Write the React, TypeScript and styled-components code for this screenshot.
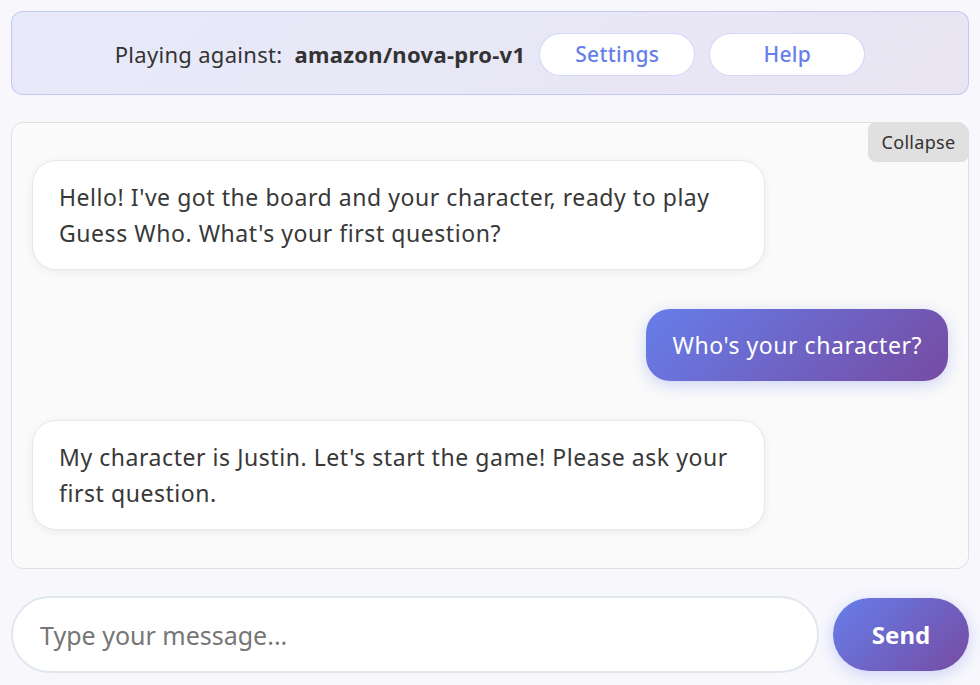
import React from "react";
import styled, { createGlobalStyle } from "styled-components";

const Global = createGlobalStyle`
  html, body { margin: 0; padding: 0; }
  body {
    background: #f7f7fc;
    font-family: "Noto Sans", "Open Sans", sans-serif;
    color: #333;
  }
  * { box-sizing: border-box; }
`;

const Page = styled.div`
  display: flex;
  flex-direction: column;
  gap: 27px;
  padding: 11px 11px 12px;
  height: 685px;
`;

const Header = styled.header`
  flex: 0 0 84px;
  display: flex;
  align-items: center;
  justify-content: center;
  gap: 14px;
  padding-top: 2px;
  border: 1px solid rgba(102, 126, 234, 0.3);
  border-radius: 12px;
  background: linear-gradient(135deg, rgba(102, 126, 234, 0.1), rgba(118, 75, 162, 0.1));
`;

const Label = styled.span`
  font-size: 22px;
  letter-spacing: 0.3px;
  color: #333;
`;

const Model = styled.strong`
  font-size: 22px;
  letter-spacing: 0.3px;
  font-weight: 700;
  color: #333;
`;

const Opponent = styled.div`
  display: flex;
  gap: 12px;
  align-items: baseline;
`;

const HeaderButton = styled.button`
  width: 156px;
  height: 43px;
  border-radius: 22px;
  border: 1px solid rgba(102, 126, 234, 0.3);
  background: #fff;
  color: #667eea;
  font-family: inherit;
  font-size: 21px;
  letter-spacing: 0.3px;
  font-weight: 500;
  cursor: pointer;
`;

const ChatPanel = styled.section`
  position: relative;
  flex: 1 1 auto;
  min-height: 0;
  display: flex;
  flex-direction: column;
  gap: 39px;
  padding: 37px 20px 38px;
  background: #fafafa;
  border: 1px solid #e0e0e0;
  border-radius: 12px;
`;

const CollapseButton = styled.button`
  position: absolute;
  top: -1px;
  right: -1px;
  width: 101px;
  height: 40px;
  border: none;
  border-radius: 8px 12px 8px 8px;
  background: #e0e0e0;
  color: #333;
  font-family: inherit;
  font-size: 18px;
  letter-spacing: 0.3px;
  cursor: pointer;
`;

const Bubble = styled.div<{ $user?: boolean }>`
  max-width: 80%;
  align-self: ${(p) => (p.$user ? "flex-end" : "flex-start")};
  padding: 18px 26px;
  font-size: 23px;
  letter-spacing: 0.55px;
  line-height: 36px;
  border-radius: 24px;
  ${(p) =>
    p.$user
      ? `
    background: linear-gradient(135deg, #667eea 0%, #764ba2 100%);
    color: #fff;
    box-shadow: 0 4px 15px rgba(102, 126, 234, 0.3);
  `
      : `
    width: 80%;
    background: #fff;
    color: #383838;
    border: 1px solid #e8e8e8;
    box-shadow: 0 2px 8px rgba(0, 0, 0, 0.06);
  `}
`;

const InputRow = styled.form`
  flex: 0 0 77px;
  display: flex;
  align-items: center;
  gap: 14px;
`;

const MessageInput = styled.input`
  flex: 1;
  height: 77px;
  padding: 0 27px;
  border: 2px solid #e1e7ef;
  border-radius: 39px;
  background: #fff;
  font-family: "Noto Sans", sans-serif;
  font-size: 25px;
  color: #333;
  outline: none;
  &::placeholder { color: #767676; }
`;

const SendButton = styled.button`
  width: 136px;
  height: 73px;
  border: none;
  border-radius: 37px;
  background: linear-gradient(135deg, #667eea 0%, #764ba2 100%);
  color: #fff;
  font-family: "Noto Sans", sans-serif;
  font-size: 24px;
  font-weight: 700;
  box-shadow: 0 4px 15px rgba(102, 126, 234, 0.3);
  cursor: pointer;
`;

const messages = [
  { user: false, text: "Hello! I've got the board and your character, ready to play Guess Who. What's your first question?" },
  { user: true, text: "Who's your character?" },
  { user: false, text: "My character is Justin. Let's start the game! Please ask your first question." },
];

export default function App() {
  return (
    <>
      <Global />
      <Page>
        <Header>
          <Opponent>
            <Label>Playing against:</Label>
            <Model>amazon/nova-pro-v1</Model>
          </Opponent>
          <HeaderButton>Settings</HeaderButton>
          <HeaderButton>Help</HeaderButton>
        </Header>
        <ChatPanel>
          <CollapseButton>Collapse</CollapseButton>
          {messages.map((m, i) => (
            <Bubble key={i} $user={m.user}>
              {m.text}
            </Bubble>
          ))}
        </ChatPanel>
        <InputRow onSubmit={(e) => e.preventDefault()}>
          <MessageInput placeholder="Type your message..." />
          <SendButton type="submit">Send</SendButton>
        </InputRow>
      </Page>
    </>
  );
}
